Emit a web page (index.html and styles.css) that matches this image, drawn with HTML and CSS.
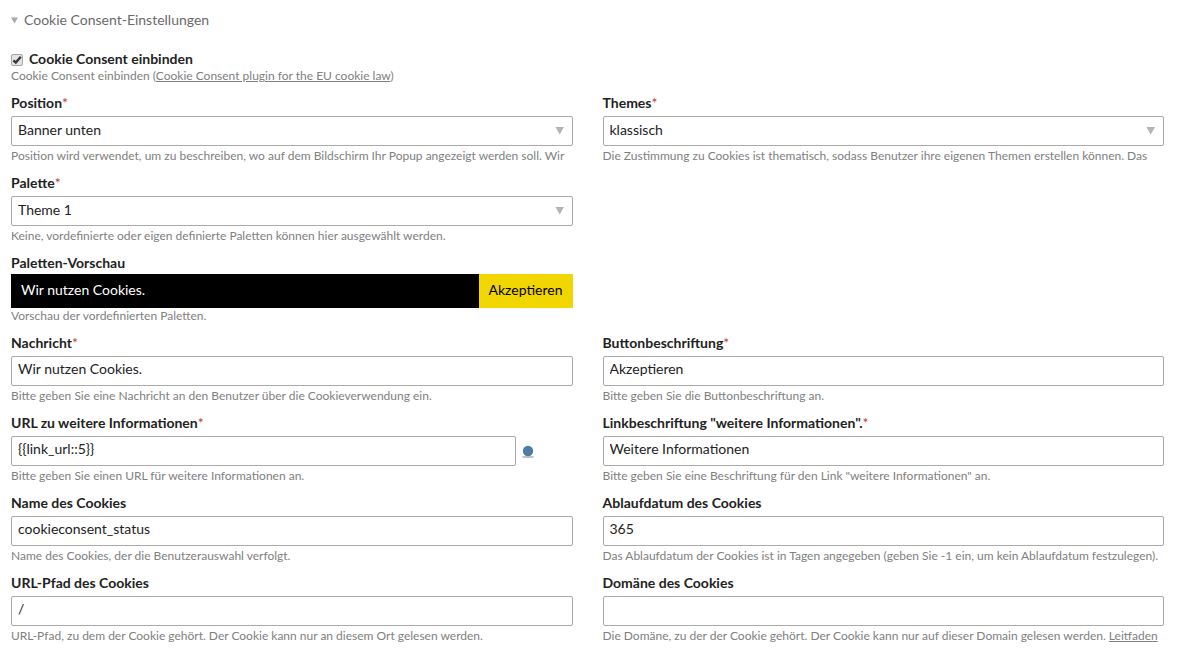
FILE: index.html
```
<!DOCTYPE html>
<html lang="de">
<head>
<meta charset="utf-8">
<title>Cookie Consent-Einstellungen</title>
<link rel="stylesheet" href="styles.css">
</head>
<body>
<form class="settings">
  <h1 class="legend"><button type="button" class="legend-toggle"><svg class="legend-arrow" viewBox="0 0 8 8" aria-hidden="true"><path d="M0 1.4h7L3.5 7.6z"/></svg>Cookie Consent-Einstellungen</button></h1>
  <div class="grid">
    <div class="field wide">
      <div class="check-row">
        <input class="check" type="checkbox" id="enable" checked>
        <label class="label check-label" for="enable">Cookie Consent einbinden</label>
      </div>
      <p class="help flush">Cookie Consent einbinden (<a href="#">Cookie Consent plugin for the EU cookie law</a>)</p>
    </div>
    <div class="field">
      <label class="label" for="position">Position<span class="required">*</span></label>
      <select class="control select" id="position"><option>Banner unten</option></select>
      <p class="help">Position wird verwendet, um zu beschreiben, wo auf dem Bildschirm Ihr Popup angezeigt werden soll. Wir</p>
    </div>
    <div class="field">
      <label class="label" for="themes">Themes<span class="required">*</span></label>
      <select class="control select" id="themes"><option>klassisch</option></select>
      <p class="help">Die Zustimmung zu Cookies ist thematisch, sodass Benutzer ihre eigenen Themen erstellen können. Das</p>
    </div>
    <div class="field first">
      <label class="label" for="palette">Palette<span class="required">*</span></label>
      <select class="control select" id="palette"><option>Theme 1</option></select>
      <p class="help">Keine, vordefinierte oder eigen definierte Paletten können hier ausgewählt werden.</p>
    </div>
    <div class="field first">
      <h2 class="label preview-label">Paletten-Vorschau</h2>
      <div class="preview">
        <span class="preview-message">Wir nutzen Cookies.</span>
        <button type="button" class="preview-accept">Akzeptieren</button>
      </div>
      <p class="help flush">Vorschau der vordefinierten Paletten.</p>
    </div>
    <div class="field first">
      <label class="label" for="message">Nachricht<span class="required">*</span></label>
      <input class="control" type="text" id="message" value="Wir nutzen Cookies.">
      <p class="help">Bitte geben Sie eine Nachricht an den Benutzer über die Cookieverwendung ein.</p>
    </div>
    <div class="field">
      <label class="label" for="dismiss">Buttonbeschriftung<span class="required">*</span></label>
      <input class="control" type="text" id="dismiss" value="Akzeptieren">
      <p class="help">Bitte geben Sie die Buttonbeschriftung an.</p>
    </div>
    <div class="field">
      <label class="label" for="href">URL zu weitere Informationen<span class="required">*</span></label>
      <div class="picker-row">
        <input class="control picker-input" type="text" id="href" value="{{link_url::5}}">
        <button type="button" class="picker" aria-label="Seite auswählen"><svg class="picker-icon" viewBox="0 0 12 14" aria-hidden="true"><rect x="0.5" y="11" width="11" height="2" fill="#c4c4c4"/><circle cx="6" cy="6" r="5.2" fill="#4d7ca6"/></svg></button>
      </div>
      <p class="help">Bitte geben Sie einen URL für weitere Informationen an.</p>
    </div>
    <div class="field">
      <label class="label" for="link">Linkbeschriftung "weitere Informationen".<span class="required">*</span></label>
      <input class="control" type="text" id="link" value="Weitere Informationen">
      <p class="help">Bitte geben Sie eine Beschriftung für den Link "weitere Informationen" an.</p>
    </div>
    <div class="field">
      <label class="label" for="name">Name des Cookies</label>
      <input class="control" type="text" id="name" value="cookieconsent_status">
      <p class="help">Name des Cookies, der die Benutzerauswahl verfolgt.</p>
    </div>
    <div class="field">
      <label class="label" for="expiry">Ablaufdatum des Cookies</label>
      <input class="control" type="text" id="expiry" value="365">
      <p class="help">Das Ablaufdatum der Cookies ist in Tagen angegeben (geben Sie -1 ein, um kein Ablaufdatum festzulegen).</p>
    </div>
    <div class="field">
      <label class="label" for="path">URL-Pfad des Cookies</label>
      <input class="control" type="text" id="path" value="/">
      <p class="help">URL-Pfad, zu dem der Cookie gehört. Der Cookie kann nur an diesem Ort gelesen werden.</p>
    </div>
    <div class="field">
      <label class="label" for="domain">Domäne des Cookies</label>
      <input class="control" type="text" id="domain">
      <p class="help">Die Domäne, zu der der Cookie gehört. Der Cookie kann nur auf dieser Domain gelesen werden. <a href="#">Leitfaden</a></p>
    </div>
  </div>
</form>
</body>
</html>
```
FILE: styles.css
```
* {
  box-sizing: border-box;
}

body {
  margin: 0;
  background: #fff;
  color: #222;
  font: 14px/18px Lato, "Open Sans", sans-serif;
}

button,
input,
select {
  margin: 0;
  font: inherit;
  color: inherit;
}

.settings {
  padding: 11px 13px 24px 11px;
}

.legend {
  margin: 0 0 21px;
  font: inherit;
}

.legend-toggle {
  display: flex;
  align-items: center;
  gap: 5px;
  padding: 0;
  border: 0;
  background: none;
  color: #6a6a6c;
}

.legend-arrow {
  width: 8px;
  height: 8px;
  fill: #aaa;
}

.grid {
  display: grid;
  grid-template-columns: 1fr 1fr;
  gap: 10px 30px;
}

.field {
  min-width: 0;
}

.wide {
  grid-column: 1 / -1;
}

.first {
  grid-column-start: 1;
}

.label {
  display: block;
  margin: 0;
  padding-bottom: 4px;
  font-size: 14px;
  font-weight: 700;
  line-height: 18px;
}

.required {
  color: #c33;
  font-weight: 400;
}

.help {
  margin: 2px 0 0;
  height: 16px;
  overflow: hidden;
  color: #808080;
  font-size: 12px;
  line-height: 16px;
  white-space: nowrap;
}

.help a {
  color: inherit;
}

.flush {
  margin-top: 0;
}

.control {
  display: block;
  width: 100%;
  height: 30px;
  padding: 0 6px 5px;
  border: 1px solid #aaa;
  border-radius: 2px;
  background: #fff;
}

.select {
  appearance: none;
  padding-bottom: 2px;
  background: #fff url("data:image/svg+xml,%3Csvg xmlns='http://www.w3.org/2000/svg' viewBox='0 0 9 8'%3E%3Cpath d='M0.5 0h8.5L4.7 7.5z' fill='%23b3b3b3'/%3E%3C/svg%3E") no-repeat right 8px center / 9px 8px;
}

.check-row {
  display: flex;
  align-items: center;
  gap: 6px;
}

.check {
  appearance: none;
  width: 12px;
  height: 12px;
  margin-top: 2px;
  border: 1px solid #a6a6a6;
  border-radius: 2px;
  background: #e4e4e4;
}

.check:checked {
  background: #e4e4e4 url("data:image/svg+xml,%3Csvg xmlns='http://www.w3.org/2000/svg' viewBox='0 0 10 10'%3E%3Cpath d='M1.4 5.4L3.8 7.6L8.8 1.8' fill='none' stroke='%23383838' stroke-width='2.4'/%3E%3C/svg%3E") no-repeat center / 10px 10px;
}

.check-label {
  padding-bottom: 0;
}

.preview-label {
  padding-bottom: 2px;
}

.preview {
  display: flex;
  height: 34px;
  background: #000;
  color: #fff;
}

.preview-message {
  flex: 1;
  padding: 7px 10px;
}

.preview-accept {
  padding: 0 10px 2px;
  border: 0;
  background: #f1d600;
  color: #000;
}

.picker-row {
  display: flex;
  align-items: center;
  gap: 6px;
}

.picker-input {
  width: 90%;
}

.picker {
  display: flex;
  padding: 2px 0 0;
  border: 0;
  background: none;
}

.picker-icon {
  width: 12px;
  height: 14px;
}
```
